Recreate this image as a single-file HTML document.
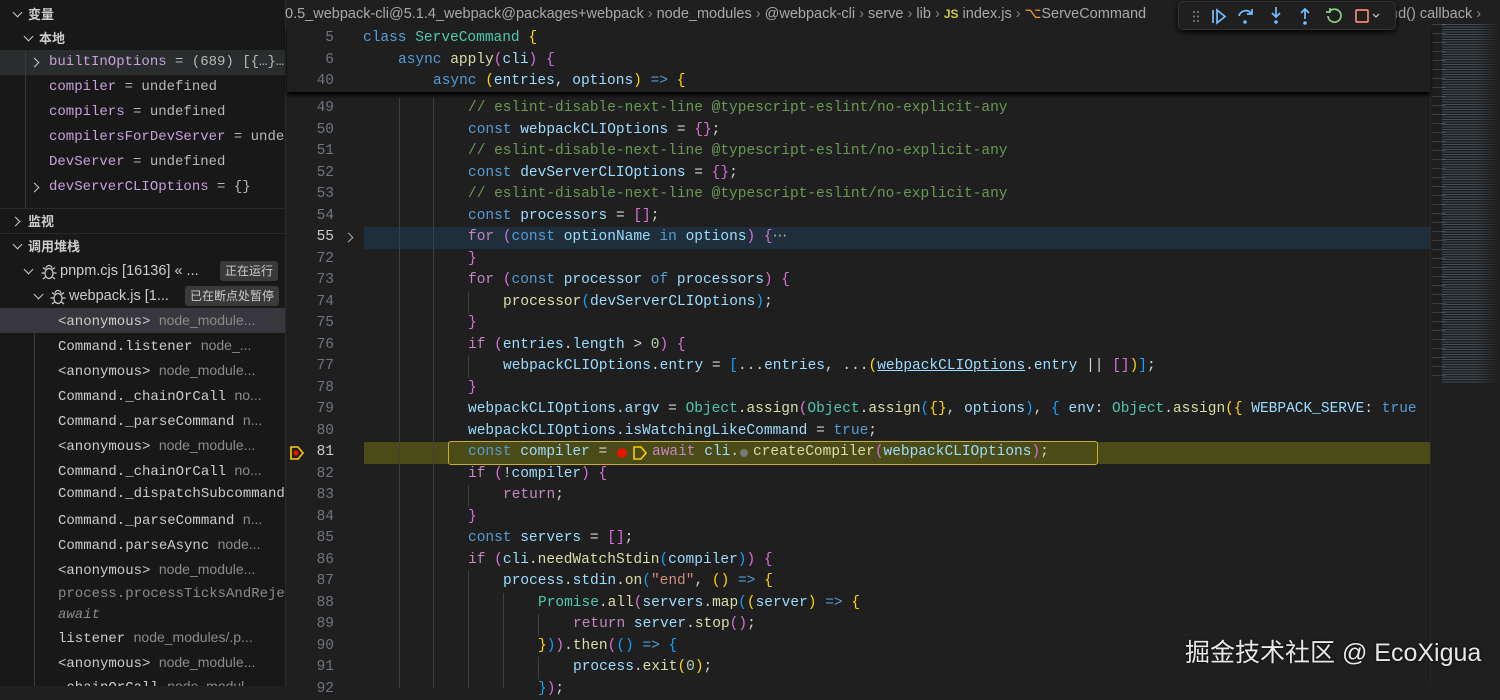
<!DOCTYPE html>
<html><head><meta charset="utf-8"><style>
*{margin:0;padding:0;box-sizing:border-box}
body{width:1500px;height:686px;overflow:hidden;background:#1f1f1f;position:relative;font-family:"Liberation Sans","Noto Sans CJK SC",sans-serif}
#side{position:absolute;left:0;top:0;width:286px;height:686px;background:#181818;border-right:1px solid #2b2b2b;overflow:hidden}
.r{position:absolute;left:0;width:286px;height:25px;line-height:25px;white-space:nowrap;font-size:14px;color:#ccc}
.mono{font-family:"Liberation Mono",monospace;font-size:14px}
.hd{font-weight:bold;font-size:13px;color:#ccc}
.chev{position:absolute;width:7px;height:7px;border-right:1.5px solid #ccc;border-bottom:1.5px solid #ccc}
.down{transform:rotate(45deg)}
.right{transform:rotate(-45deg)}
.vn{color:#c9a0dc}
.vv{color:#b8b8b8}
.dim{color:#8b8b8b;font-family:"Liberation Sans",sans-serif}
.badge{position:absolute;background:#3a3a3a;color:#ccc;font-size:12px;line-height:20px;height:20px;padding:0 5px;border-radius:3px;top:2px}
.ln{position:absolute;left:287px;width:47px;text-align:right;font-family:"Liberation Mono",monospace;font-size:14.5px;color:#6e7681;line-height:21.5px;height:21.5px}
.cl{position:absolute;font-family:"Liberation Mono",monospace;font-size:14.5px;line-height:21.5px;height:21.5px;white-space:pre;color:#ccc}
.k{color:#569cd6}.c{color:#6a9955}.f{color:#dcdcaa}.v{color:#9cdcfe}.t{color:#4ec9b0}.y{color:#ffd700}.p{color:#da70d6}.b{color:#179fff}.kc{color:#c586c0}.s{color:#ce9178}.n{color:#b5cea8}.w{color:#d4d4d4}
.guide{position:absolute;width:1px;background:#404040}
#code{position:absolute;left:0;top:2px;width:1500px;height:686px}
</style></head><body>
<div id="side">
 <div class="r hd" style="top:2px"><span class="chev down" style="left:14px;top:7px"></span><span style="position:absolute;left:28px">变量</span></div>
 <div class="r hd" style="top:26px"><span class="chev down" style="left:25px;top:7px"></span><span style="position:absolute;left:39px">本地</span></div>
 <div class="r mono" style="top:50px;background:#2a2d2e"><span class="chev right" style="left:31px;top:9px"></span><span style="position:absolute;left:49px"><span class="vn">builtInOptions</span><span class="vv"> = (689) [{…}…</span></span></div>
 <div class="r mono" style="top:75px"><span style="position:absolute;left:49px"><span class="vn">compiler</span><span class="vv"> = undefined</span></span></div>
 <div class="r mono" style="top:100px"><span style="position:absolute;left:49px"><span class="vn">compilers</span><span class="vv"> = undefined</span></span></div>
 <div class="r mono" style="top:125px"><span style="position:absolute;left:49px"><span class="vn">compilersForDevServer</span><span class="vv"> = unde…</span></span></div>
 <div class="r mono" style="top:150px"><span style="position:absolute;left:49px"><span class="vn">DevServer</span><span class="vv"> = undefined</span></span></div>
 <div class="r mono" style="top:175px"><span class="chev right" style="left:31px;top:9px"></span><span style="position:absolute;left:49px"><span class="vn">devServerCLIOptions</span><span class="vv"> = {}</span></span></div>
 <div class="r mono" style="top:203px;height:5px;overflow:hidden"><span style="position:absolute;left:49px;top:0px"><span class="vn">devServerFlags</span><span class="vv"> = (77) [{…</span></span></div>
 <div style="position:absolute;left:25px;top:50px;width:1px;height:158px;background:#3a3a3a"></div>
 <div style="position:absolute;left:0;top:208px;width:286px;height:1px;background:#2b2b2b"></div>
 <div class="r hd" style="top:209px"><span class="chev right" style="left:12px;top:9px"></span><span style="position:absolute;left:28px">监视</span></div>
 <div style="position:absolute;left:0;top:233px;width:286px;height:1px;background:#2b2b2b"></div>
 <div class="r hd" style="top:234px"><span class="chev down" style="left:14px;top:7px"></span><span style="position:absolute;left:28px">调用堆栈</span></div>
 <div class="r" style="top:259px"><span class="chev down" style="left:25px;top:7px"></span>
  <svg style="position:absolute;left:40px;top:4px" width="18" height="18" viewBox="0 0 18 18" fill="none" stroke="#ccc" stroke-width="1.2"><ellipse cx="9" cy="10.5" rx="4" ry="5"/><path d="M6 5.5a3 3 0 0 1 6 0M5 10H1.5M16.5 10H13M5.5 6.5 3 4.5M12.5 6.5 15 4.5M5.5 14 3 16M12.5 14 15 16"/></svg>
  <span style="position:absolute;left:60px;font-size:14.5px">pnpm.cjs [16136] « ...</span><span class="badge" style="left:220px">正在运行</span></div>
 <div class="r" style="top:284px"><span class="chev down" style="left:35px;top:7px"></span>
  <svg style="position:absolute;left:49px;top:4px" width="18" height="18" viewBox="0 0 18 18" fill="none" stroke="#ccc" stroke-width="1.2"><ellipse cx="9" cy="10.5" rx="4" ry="5"/><path d="M6 5.5a3 3 0 0 1 6 0M5 10H1.5M16.5 10H13M5.5 6.5 3 4.5M12.5 6.5 15 4.5M5.5 14 3 16M12.5 14 15 16"/></svg>
  <span style="position:absolute;left:69px;font-size:14.5px">webpack.js [1...</span><span class="badge" style="left:185px">已在断点处暂停</span></div>
 <div style="position:absolute;left:34px;top:308px;width:1px;height:378px;background:#3a3a3a"></div>
 <div class="r mono" style="top:308px;background:#37373d"><span style="position:absolute;left:58px">&lt;anonymous&gt; <span class="dim" style="font-size:14px">node_module...</span></span></div>
 <div class="r mono" style="top:333px"><span style="position:absolute;left:58px">Command.listener <span class="dim">node_...</span></span></div>
 <div class="r mono" style="top:358px"><span style="position:absolute;left:58px">&lt;anonymous&gt; <span class="dim">node_module...</span></span></div>
 <div class="r mono" style="top:383px"><span style="position:absolute;left:58px">Command._chainOrCall <span class="dim">no...</span></span></div>
 <div class="r mono" style="top:408px"><span style="position:absolute;left:58px">Command._parseCommand <span class="dim">n...</span></span></div>
 <div class="r mono" style="top:433px"><span style="position:absolute;left:58px">&lt;anonymous&gt; <span class="dim">node_module...</span></span></div>
 <div class="r mono" style="top:458px"><span style="position:absolute;left:58px">Command._chainOrCall <span class="dim">no...</span></span></div>
 <div class="r mono" style="top:482px"><span style="position:absolute;left:58px">Command._dispatchSubcommand</span></div>
 <div class="r mono" style="top:507px"><span style="position:absolute;left:58px">Command._parseCommand <span class="dim">n...</span></span></div>
 <div class="r mono" style="top:532px"><span style="position:absolute;left:58px">Command.parseAsync <span class="dim">node...</span></span></div>
 <div class="r mono" style="top:557px"><span style="position:absolute;left:58px">&lt;anonymous&gt; <span class="dim">node_module...</span></span></div>
 <div class="r mono" style="top:582px;color:#8b8b8b"><span style="position:absolute;left:58px">process.processTicksAndRejections</span></div>
 <div class="r mono" style="top:603px;color:#8b8b8b"><span style="position:absolute;left:58px;font-style:italic">await</span></div>
 <div class="r mono" style="top:625px"><span style="position:absolute;left:58px">listener <span class="dim">node_modules/.p...</span></span></div>
 <div class="r mono" style="top:650px"><span style="position:absolute;left:58px">&lt;anonymous&gt; <span class="dim">node_module...</span></span></div>
 <div class="r mono" style="top:674px"><span style="position:absolute;left:58px">_chainOrCall <span class="dim">node_modul...</span></span></div>
</div>

<!-- breadcrumb -->
<div style="position:absolute;left:285px;top:4px;font-size:14.5px;color:#a9a9a9;white-space:nowrap;line-height:20px">0.5_webpack-cli@5.1.4_webpack@packages+webpack <span style="color:#888">›</span> node_modules <span style="color:#888">›</span> @webpack-cli <span style="color:#888">›</span> serve <span style="color:#888">›</span> lib <span style="color:#888">›</span> <b style="color:#cbcb41;font-size:12px">JS</b> index.js <span style="color:#888">›</span> <span style="color:#ee9d28">⌥</span>ServeCommand</div>
<div style="position:absolute;left:1390px;top:4px;font-size:14.5px;color:#a9a9a9;white-space:nowrap;line-height:20px">nd() callback <span style="color:#888">›</span></div>

<!-- minimap -->
<div style="position:absolute;left:1430px;top:26px;width:70px;height:660px;background:#1e1e1e;border-left:1px solid #2a2a2a"></div>
<div style="position:absolute;left:1442px;top:24px;width:58px;height:360px;opacity:.35;background:repeating-linear-gradient(180deg,#7fa8c8 0,#7fa8c8 1px,transparent 1px,transparent 2.5px);-webkit-mask:linear-gradient(90deg,#000 60%,transparent)"></div>
<div style="position:absolute;left:1432px;top:24px;width:14px;height:360px;opacity:.25;background:repeating-linear-gradient(180deg,#7fa8c8 0,#7fa8c8 1px,transparent 1px,transparent 9px)"></div>

<!-- line 55 hover -->
<div style="position:absolute;left:364px;top:227px;width:1066px;height:21.5px;background:#1e2e3b"></div>
<!-- line 81 highlight -->
<div style="position:absolute;left:364px;top:442px;width:1066px;height:22px;background:#4b4b18"></div>
<div style="position:absolute;left:448px;top:441px;width:650px;height:24px;border:1.5px solid #c8b12a;border-radius:3px"></div>

<div id="code">
<div class="guide" style="left:399px;top:96px;height:590px"></div>
<div class="guide" style="left:433px;top:96px;height:590px"></div>
<div class="guide" style="left:468px;top:290px;height:22px"></div>
<div class="guide" style="left:468px;top:354px;height:22px"></div>
<div class="guide" style="left:468px;top:483px;height:22px"></div>
<div class="guide" style="left:468px;top:569px;height:117px"></div>
<div class="guide" style="left:503px;top:591px;height:95px"></div>
<div class="guide" style="left:538px;top:612px;height:22px"></div>
<div class="guide" style="left:538px;top:655px;height:22px"></div>

<div class="ln" style="top:96px">49</div><div class="cl" style="left:468px;top:96px"><span class="c">// eslint-disable-next-line @typescript-eslint/no-explicit-any</span></div>
<div class="ln" style="top:117.5px">50</div><div class="cl" style="left:468px;top:117.5px"><span class="k">const</span> <span class="v">webpackCLIOptions</span> <span class="w">=</span> <span class="p">{}</span><span class="w">;</span></div>
<div class="ln" style="top:139px">51</div><div class="cl" style="left:468px;top:139px"><span class="c">// eslint-disable-next-line @typescript-eslint/no-explicit-any</span></div>
<div class="ln" style="top:160.5px">52</div><div class="cl" style="left:468px;top:160.5px"><span class="k">const</span> <span class="v">devServerCLIOptions</span> <span class="w">=</span> <span class="p">{}</span><span class="w">;</span></div>
<div class="ln" style="top:182px">53</div><div class="cl" style="left:468px;top:182px"><span class="c">// eslint-disable-next-line @typescript-eslint/no-explicit-any</span></div>
<div class="ln" style="top:203.5px">54</div><div class="cl" style="left:468px;top:203.5px"><span class="k">const</span> <span class="v">processors</span> <span class="w">=</span> <span class="p">[]</span><span class="w">;</span></div>
<div class="ln" style="top:225px;color:#ccc">55</div><span class="chev right" style="position:absolute;left:345px;top:232px;border-color:#aaa"></span><div class="cl" style="left:468px;top:225px"><span class="kc">for</span> <span class="p">(</span><span class="k">const</span> <span class="v">optionName</span> <span class="k">in</span> <span class="v">options</span><span class="p">)</span> <span class="p">{</span><span style="color:#aaa">⋯</span></div>
<div class="ln" style="top:246.5px">72</div><div class="cl" style="left:468px;top:246.5px"><span class="p">}</span></div>
<div class="ln" style="top:268px">73</div><div class="cl" style="left:468px;top:268px"><span class="kc">for</span> <span class="p">(</span><span class="k">const</span> <span class="v">processor</span> <span class="k">of</span> <span class="v">processors</span><span class="p">)</span> <span class="p">{</span></div>
<div class="ln" style="top:289.5px">74</div><div class="cl" style="left:503px;top:289.5px"><span class="f">processor</span><span class="b">(</span><span class="v">devServerCLIOptions</span><span class="b">)</span><span class="w">;</span></div>
<div class="ln" style="top:311px">75</div><div class="cl" style="left:468px;top:311px"><span class="p">}</span></div>
<div class="ln" style="top:332.5px">76</div><div class="cl" style="left:468px;top:332.5px"><span class="kc">if</span> <span class="p">(</span><span class="v">entries</span><span class="w">.</span><span class="v">length</span> <span class="w">&gt;</span> <span class="n">0</span><span class="p">)</span> <span class="p">{</span></div>
<div class="ln" style="top:354px">77</div><div class="cl" style="left:503px;top:354px"><span class="v">webpackCLIOptions</span><span class="w">.</span><span class="v">entry</span> <span class="w">=</span> <span class="b">[</span><span class="w">...</span><span class="v">entries</span><span class="w">, ...</span><span class="y">(</span><span class="v" style="text-decoration:underline">webpackCLIOptions</span><span class="w">.</span><span class="v">entry</span> <span class="w">||</span> <span class="p">[]</span><span class="y">)</span><span class="b">]</span><span class="w">;</span></div>
<div class="ln" style="top:375.5px">78</div><div class="cl" style="left:468px;top:375.5px"><span class="p">}</span></div>
<div class="ln" style="top:397px">79</div><div class="cl" style="left:468px;top:397px"><span class="v">webpackCLIOptions</span><span class="w">.</span><span class="v">argv</span> <span class="w">=</span> <span class="t">Object</span><span class="w">.</span><span class="f">assign</span><span class="p">(</span><span class="t">Object</span><span class="w">.</span><span class="f">assign</span><span class="b">(</span><span class="y">{}</span><span class="w">,</span> <span class="v">options</span><span class="b">)</span><span class="w">,</span> <span class="b">{</span> <span class="v">env</span><span class="w">:</span> <span class="t">Object</span><span class="w">.</span><span class="f">assign</span><span class="y">({</span> <span class="v">WEBPACK_SERVE</span><span class="w">:</span> <span class="k">true</span></div>
<div class="ln" style="top:418.5px">80</div><div class="cl" style="left:468px;top:418.5px"><span class="v">webpackCLIOptions</span><span class="w">.</span><span class="v">isWatchingLikeCommand</span> <span class="w">=</span> <span class="k">true</span><span class="w">;</span></div>
<div class="ln" style="top:440px;color:#ccc">81</div>
<svg style="position:absolute;left:289px;top:443px" width="16" height="16" viewBox="0 0 16 16"><path d="M2 2h7l5 6-5 6H2z" fill="none" stroke="#ffcc00" stroke-width="1.6"/><circle cx="7" cy="8" r="2.6" fill="#e51400"/></svg>
<div class="cl" style="left:468px;top:440px"><span class="k">const</span> <span class="v">compiler</span> <span class="w">=</span></div>
<div style="position:absolute;left:617px;top:446px;width:10px;height:10px;border-radius:50%;background:#e51400"></div>
<svg style="position:absolute;left:632px;top:443px" width="16" height="16" viewBox="0 0 16 16"><path d="M2 2h7l5 6-5 6H2z" fill="none" stroke="#ffcc00" stroke-width="1.6"/></svg>
<div class="cl" style="left:652px;top:440px"><span class="kc">await</span> <span class="v">cli</span><span class="w">.</span></div>
<div style="position:absolute;left:740px;top:447px;width:8px;height:8px;border-radius:50%;background:#777"></div>
<div class="cl" style="left:753px;top:440px"><span class="f">createCompiler</span><span class="p">(</span><span class="v">webpackCLIOptions</span><span class="p">)</span><span class="w">;</span></div>
<div class="ln" style="top:461.5px">82</div><div class="cl" style="left:468px;top:461.5px"><span class="kc">if</span> <span class="p">(</span><span class="w">!</span><span class="v">compiler</span><span class="p">)</span> <span class="p">{</span></div>
<div class="ln" style="top:483px">83</div><div class="cl" style="left:503px;top:483px"><span class="kc">return</span><span class="w">;</span></div>
<div class="ln" style="top:504.5px">84</div><div class="cl" style="left:468px;top:504.5px"><span class="p">}</span></div>
<div class="ln" style="top:526px">85</div><div class="cl" style="left:468px;top:526px"><span class="k">const</span> <span class="v">servers</span> <span class="w">=</span> <span class="p">[]</span><span class="w">;</span></div>
<div class="ln" style="top:547.5px">86</div><div class="cl" style="left:468px;top:547.5px"><span class="kc">if</span> <span class="p">(</span><span class="v">cli</span><span class="w">.</span><span class="f">needWatchStdin</span><span class="b">(</span><span class="v">compiler</span><span class="b">)</span><span class="p">)</span> <span class="p">{</span></div>
<div class="ln" style="top:569px">87</div><div class="cl" style="left:503px;top:569px"><span class="v">process</span><span class="w">.</span><span class="v">stdin</span><span class="w">.</span><span class="f">on</span><span class="b">(</span><span class="s">"end"</span><span class="w">,</span> <span class="y">()</span> <span class="k">=&gt;</span> <span class="y">{</span></div>
<div class="ln" style="top:590.5px">88</div><div class="cl" style="left:538px;top:590.5px"><span class="t">Promise</span><span class="w">.</span><span class="f">all</span><span class="p">(</span><span class="v">servers</span><span class="w">.</span><span class="f">map</span><span class="b">(</span><span class="y">(</span><span class="v">server</span><span class="y">)</span> <span class="k">=&gt;</span> <span class="y">{</span></div>
<div class="ln" style="top:612px">89</div><div class="cl" style="left:573px;top:612px"><span class="kc">return</span> <span class="v">server</span><span class="w">.</span><span class="f">stop</span><span class="p">()</span><span class="w">;</span></div>
<div class="ln" style="top:633.5px">90</div><div class="cl" style="left:538px;top:633.5px"><span class="y">}</span><span class="b">)</span><span class="p">)</span><span class="w">.</span><span class="f">then</span><span class="p">(</span><span class="b">()</span> <span class="k">=&gt;</span> <span class="b">{</span></div>
<div class="ln" style="top:655px">91</div><div class="cl" style="left:573px;top:655px"><span class="v">process</span><span class="w">.</span><span class="f">exit</span><span class="y">(</span><span class="n">0</span><span class="y">)</span><span class="w">;</span></div>
<div class="ln" style="top:676.5px">92</div><div class="cl" style="left:538px;top:676.5px"><span class="b">}</span><span class="p">)</span><span class="w">;</span></div>
</div>

<!-- sticky scroll -->
<div style="position:absolute;left:287px;top:26px;width:1143px;height:66px;background:#1f1f1f;box-shadow:0 3px 4px #000"></div>
<div class="ln" style="top:28px">5</div><div class="cl" style="left:363px;top:28px"><span class="k">class</span> <span class="t">ServeCommand</span> <span class="y">{</span></div>
<div class="ln" style="top:49.5px">6</div><div class="cl" style="left:398px;top:49.5px"><span class="k">async</span> <span class="f">apply</span><span class="p">(</span><span class="v">cli</span><span class="p">)</span> <span class="p">{</span></div>
<div class="ln" style="top:71px">40</div><div class="cl" style="left:433px;top:71px"><span class="k">async</span> <span class="y">(</span><span class="v">entries</span><span class="w">,</span> <span class="v">options</span><span class="y">)</span> <span class="k">=&gt;</span> <span class="y">{</span></div>

<!-- debug toolbar -->
<div style="position:absolute;left:1178px;top:1px;width:218px;height:29px;background:#1f1f1f;border:1px solid #333;border-radius:5px;box-shadow:0 2px 6px #000">
<svg width="218" height="29" viewBox="0 0 218 29" fill="none" stroke-width="1.7">
 <g fill="#777"><circle cx="15" cy="10" r="1.1"/><circle cx="19" cy="10" r="1.1"/><circle cx="15" cy="14.5" r="1.1"/><circle cx="19" cy="14.5" r="1.1"/><circle cx="15" cy="19" r="1.1"/><circle cx="19" cy="19" r="1.1"/></g>
 <path d="M34 8v13M38 8l8 6.5-8 6.5z" stroke="#75beff"/>
 <path d="M60 14a7 7 0 0 1 12-3M73 7v5h-5" stroke="#75beff"/><circle cx="66" cy="20" r="1.8" fill="#75beff" stroke="none"/>
 <path d="M97 5v10M93 11l4 4 4-4" stroke="#75beff"/><circle cx="97" cy="20" r="1.8" fill="#75beff" stroke="none"/>
 <path d="M126 17V7M122 11l4-4 4 4" stroke="#75beff"/><circle cx="126" cy="21" r="1.8" fill="#75beff" stroke="none"/>
 <path d="M151 9a6.5 6.5 0 1 1-2 5M151 6v4h-4" stroke="#89d185"/>
 <rect x="177" y="8" width="12" height="12" rx="1" stroke="#f48771"/>
 <path d="M194 12l3 3 3-3" stroke="#ccc" stroke-width="1.2"/>
</svg></div>

<div style="position:absolute;left:1185px;top:633px;font-size:25px;color:#e8e8e8;white-space:nowrap;font-family:'Liberation Sans','Noto Sans CJK SC',sans-serif;text-shadow:0 0 2px #000">掘金技术社区 @ EcoXigua</div>
</body></html>
